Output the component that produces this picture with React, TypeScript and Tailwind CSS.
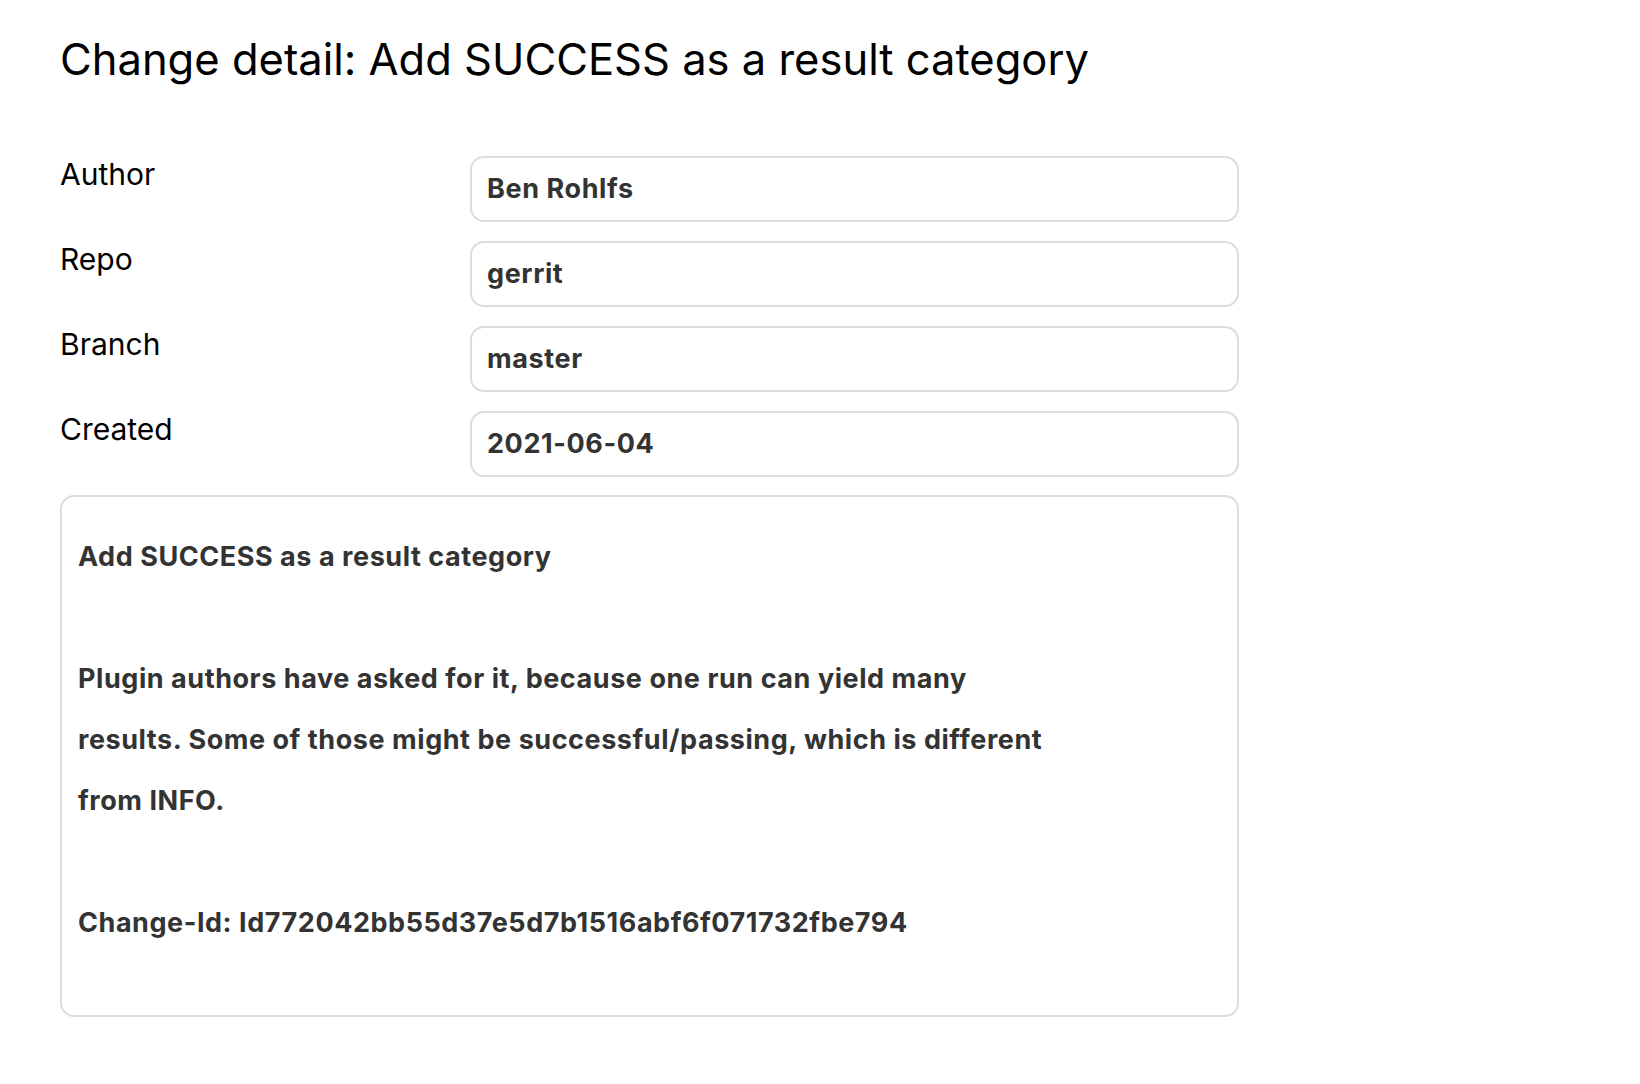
const fields = [
  { label: "Author", value: "Ben Rohlfs" },
  { label: "Repo", value: "gerrit" },
  { label: "Branch", value: "master" },
  { label: "Created", value: "2021-06-04" },
];

const messageLines = [
  "Add SUCCESS as a result category",
  "",
  "Plugin authors have asked for it, because one run can yield many",
  "results. Some of those might be successful/passing, which is different",
  "from INFO.",
  "",
  "Change-Id: Id772042bb55d37e5d7b1516abf6f071732fbe794",
];

const ChangeDetail = () => {
  return (
    <div className="min-h-screen bg-white pl-[60px] pt-[33px] font-['Inter','Noto_Sans',sans-serif] text-black">
      <h1 className="text-[43.5px] leading-[52px] font-normal">
        Change detail: Add SUCCESS as a result category
      </h1>

      <div className="mt-[71px] w-[1179px]">
        <div className="grid grid-cols-[410px_769px] gap-y-[19px]">
          {fields.map((f) => (
            <div key={f.label} className="contents">
              <div className="text-[30px] leading-[36px]">{f.label}</div>
              <div className="h-[66px] rounded-[14px] border-2 border-[#dcdcdc] pl-[15px] pt-[15px] text-[27px] font-bold leading-[32px] tracking-[0.6px] text-[#333333]">
                {f.value}
              </div>
            </div>
          ))}
        </div>

        {/* commit message */}
        <div className="mt-[18px] rounded-[14px] border-2 border-[#dcdcdc] pl-[16px] pt-[29px] pb-[62px] text-[27px] font-bold leading-[61px] tracking-[0.55px] text-[#333333]">
          {messageLines.map((line, i) => (
            <div key={i} className="h-[61px] whitespace-pre">
              {line}
            </div>
          ))}
        </div>
      </div>
    </div>
  );
};

export default function App() {
  return <ChangeDetail />;
}
